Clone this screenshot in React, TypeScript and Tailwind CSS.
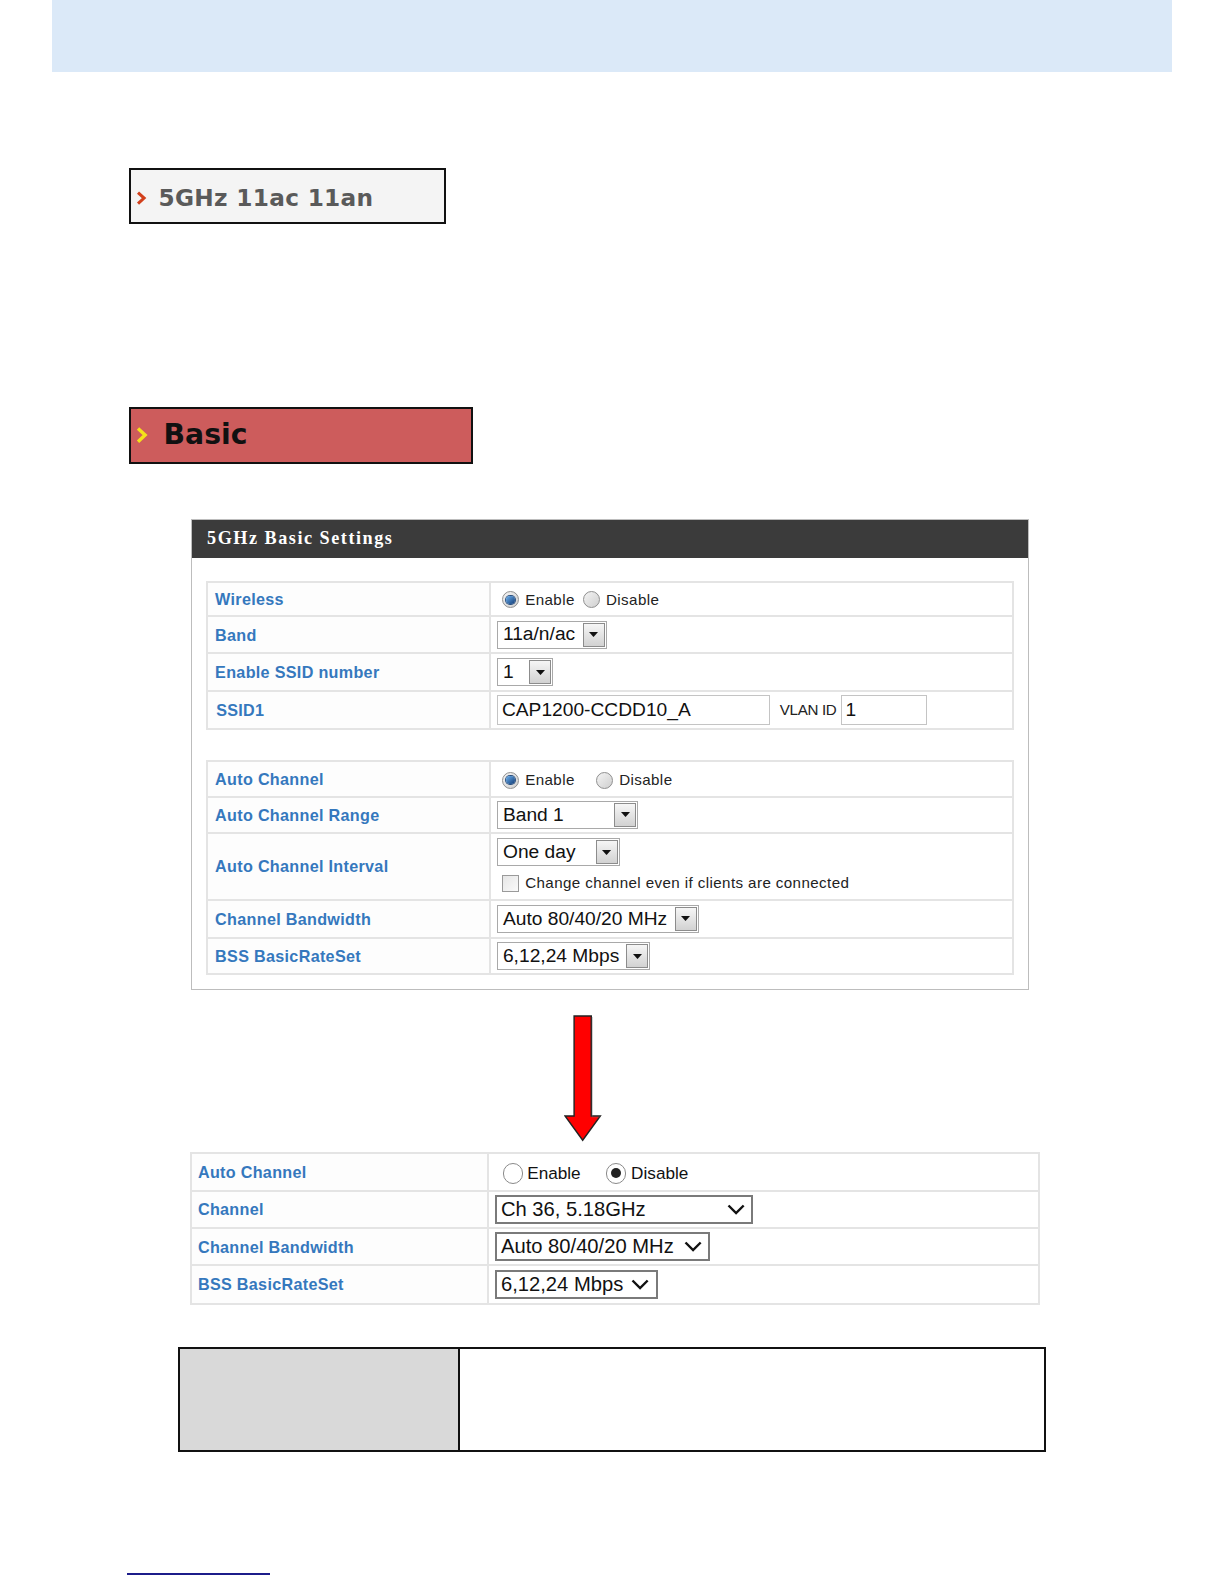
import React from "react";

const labelFont = { fontFamily: "'Liberation Sans', Arial, sans-serif" };

function OldRadio({ checked }: { checked?: boolean }) {
  return (
    <span className="inline-flex h-[17px] w-[17px] items-center justify-center rounded-full border border-[#8f8f8f] bg-gradient-to-br from-[#f4f4f4] to-[#cfcfcf]">
      {checked && (
        <span className="h-[8px] w-[8px] rounded-full bg-gradient-to-br from-[#6fb3f0] to-[#123d78] ring-1 ring-[#2a4f7f]" />
      )}
    </span>
  );
}

function NewRadio({ checked }: { checked?: boolean }) {
  return (
    <span className="inline-flex h-[20px] w-[20px] items-center justify-center rounded-full border border-[#8a8a8a] bg-white">
      {checked && <span className="h-[10px] w-[10px] rounded-full bg-[#222]" />}
    </span>
  );
}

function OldSelect({ value, width }: { value: string; width: string }) {
  return (
    <div className={`flex h-[28px] items-stretch border border-[#a9a9a9] bg-white ${width}`}>
      <span className="flex flex-1 items-center pl-[5px] text-[19px] text-[#111]" style={labelFont}>
        {value}
      </span>
      <span className="m-[1px] flex w-[22px] items-center justify-center border border-[#8c8c8c] bg-gradient-to-b from-[#f6f6f6] to-[#d2d2d2]">
        <svg width="9" height="5" viewBox="0 0 9 5">
          <path d="M0 0h9L4.5 5z" fill="#111" />
        </svg>
      </span>
    </div>
  );
}

function NewSelect({ value, width }: { value: string; width: string }) {
  return (
    <div className={`flex h-[29px] items-center justify-between border-2 border-[#7a7a7a] bg-white pl-[4px] pr-[6px] ${width}`}>
      <span className="text-[20px] text-[#111]" style={labelFont}>
        {value}
      </span>
      <svg width="18" height="11" viewBox="0 0 18 11">
        <path d="M1.5 1.5 9 9l7.5-7.5" fill="none" stroke="#111" strokeWidth="2.4" />
      </svg>
    </div>
  );
}

function Row({
  label,
  children,
  h,
  labelW = "w-[280px]",
  labelPad = "pl-[7px]",
}: {
  label: string;
  children: React.ReactNode;
  h: string;
  labelW?: string;
  labelPad?: string;
}) {
  return (
    <div className={`flex border-b-2 border-[#e4e4e4] last:border-b-0 ${h}`}>
      <div
        className={`flex shrink-0 items-center border-r-2 border-[#e4e4e4] bg-[#fdfdfd] ${labelPad} ${labelW} text-[16px] font-bold tracking-[0.3px] text-[#3578bd]`}
        style={labelFont}
      >
        {label}
      </div>
      <div className="flex flex-1 flex-col justify-center pl-[6px]">{children}</div>
    </div>
  );
}

function OptText({ children, className = "" }: { children: React.ReactNode; className?: string }) {
  return (
    <span className={`text-[15px] tracking-[0.4px] text-[#222] ${className}`} style={labelFont}>
      {children}
    </span>
  );
}

export default function App() {
  return (
    <div className="h-[1562px] w-full overflow-hidden bg-white [zoom:1.0101]" style={labelFont}>
      <div className="ml-[51px] h-[71px] w-[1109px] bg-[#dbe9f8]" />

      <div className="ml-[128px] mt-[95px] flex h-[56px] w-[314px] items-center border-2 border-[#111] bg-[#f4f4f4] pt-[5px]">
        <svg className="ml-[5px]" width="11" height="14" viewBox="0 0 11 14">
          <path d="M2 1.5 8 7l-6 5.5" fill="none" stroke="#d2401c" strokeWidth="3" />
        </svg>
        <span
          className="ml-[11px] text-[23px] font-bold tracking-[0.3px] text-[#5a5a5a]"
          style={{ fontFamily: "'DejaVu Sans', Verdana, sans-serif" }}
        >
          5GHz 11ac 11an
        </span>
      </div>

      <div className="ml-[128px] mt-[181px] flex h-[56px] w-[340px] items-center border-2 border-[#111] bg-[#cd5c5c]">
        <svg className="ml-[5px]" width="12" height="16" viewBox="0 0 12 16">
          <path d="M2 1.5 9 8l-7 6.5" fill="none" stroke="#f4e11a" strokeWidth="3.4" />
        </svg>
        <span
          className="ml-[15px] text-[28px] font-bold text-[#111]"
          style={{ fontFamily: "'DejaVu Sans', Verdana, sans-serif" }}
        >
          Basic
        </span>
      </div>

      {/* Basic settings panel */}
      <div className="ml-[189px] mt-[55px] w-[830px] border border-[#bdbdbd] pb-[13px]">
        <div className="flex h-[37px] items-center bg-[#3b3b3b] pl-[15px]">
          <span
            className="text-[18px] font-bold tracking-[1.5px] text-white"
            style={{ fontFamily: "'Liberation Serif', 'Times New Roman', serif" }}
          >
            5GHz Basic Settings
          </span>
        </div>

        <div className="mx-[14px] mt-[23px] border-2 border-[#e4e4e4]">
          <Row label="Wireless" h="h-[34px]">
            <div className="flex items-center pl-[5px] pt-[2px]">
              <OldRadio checked />
              <OptText className="ml-[6px]">Enable</OptText>
              <span className="ml-[8px]" />
              <OldRadio />
              <OptText className="ml-[6px]">Disable</OptText>
            </div>
          </Row>
          <Row label="Band" h="h-[37px]">
            <OldSelect value="11a/n/ac" width="w-[109px]" />
          </Row>
          <Row label="Enable SSID number" h="h-[37px]">
            <OldSelect value="1" width="w-[56px]" />
          </Row>
          <Row label="SSID1" h="h-[36px]" labelPad="pl-[8px]">
            <div className="flex items-center">
              <div className="flex h-[30px] w-[270px] items-center border border-[#c4c4c4] pl-[4px] text-[19px] text-[#111]">
                CAP1200-CCDD10_A
              </div>
              <span className="ml-[10px] text-[15px] tracking-[-0.3px] text-[#222]">VLAN ID</span>
              <div className="ml-[4px] flex h-[30px] w-[86px] items-center border border-[#c4c4c4] pl-[4px] text-[19px] text-[#111]">
                1
              </div>
            </div>
          </Row>
        </div>

        <div className="mx-[14px] mt-[30px] border-2 border-[#e4e4e4]">
          <Row label="Auto Channel" h="h-[35px]">
            <div className="flex items-center pl-[5px] pt-[2px]">
              <OldRadio checked />
              <OptText className="ml-[6px]">Enable</OptText>
              <span className="ml-[21px]" />
              <OldRadio />
              <OptText className="ml-[6px]">Disable</OptText>
            </div>
          </Row>
          <Row label="Auto Channel Range" h="h-[36px]">
            <OldSelect value="Band 1" width="w-[140px]" />
          </Row>
          <Row label="Auto Channel Interval" h="h-[66px]">
            <OldSelect value="One day" width="w-[122px]" />
            <div className="mt-[6px] flex items-center pl-[5px]">
              <span className="h-[17px] w-[17px] border border-[#9a9a9a] bg-gradient-to-br from-[#e6e6e6] to-[#fafafa]" />
              <OptText className="ml-[6px]">Change channel even if clients are connected</OptText>
            </div>
          </Row>
          <Row label="Channel Bandwidth" h="h-[38px]">
            <OldSelect value="Auto 80/40/20 MHz" width="w-[200px]" />
          </Row>
          <Row label="BSS BasicRateSet" h="h-[34px]">
            <OldSelect value="6,12,24 Mbps" width="w-[152px]" />
          </Row>
        </div>
      </div>

      {/* arrow */}
      <div className="ml-[558px] mt-[25px] h-[126px] w-[40px]">
        <svg width="40" height="126" viewBox="0 0 40 126">
          <path d="M10 1h17v99h9l-17.5 24L1 100h9z" fill="#ff0000" stroke="#222" strokeWidth="1.4" />
          <path d="M28 2v99h8" fill="none" stroke="#777" strokeOpacity="0.4" strokeWidth="1.2" />
        </svg>
      </div>

      {/* manual channel table */}
      <div className="ml-[188px] mt-[10px] w-[842px] border-2 border-[#e4e4e4]">
        <Row label="Auto Channel" h="h-[37px]" labelW="w-[294px]" labelPad="pl-[6px]">
          <div className="flex items-center pl-[8px] pt-[3px]">
            <NewRadio />
            <span className="ml-[4px] text-[17px] text-[#111]">Enable</span>
            <span className="ml-[25px]" />
            <NewRadio checked />
            <span className="ml-[5px] text-[17px] text-[#111]">Disable</span>
          </div>
        </Row>
        <Row label="Channel" h="h-[37px]" labelW="w-[294px]" labelPad="pl-[6px]">
          <NewSelect value="Ch 36, 5.18GHz" width="w-[256px]" />
        </Row>
        <Row label="Channel Bandwidth" h="h-[37px]" labelW="w-[294px]" labelPad="pl-[6px]">
          <NewSelect value="Auto 80/40/20 MHz" width="w-[213px]" />
        </Row>
        <Row label="BSS BasicRateSet" h="h-[36px]" labelW="w-[294px]" labelPad="pl-[6px]">
          <NewSelect value="6,12,24 Mbps" width="w-[161px]" />
        </Row>
      </div>

      {/* description table */}
      <div className="ml-[176px] mt-[42px] flex h-[104px] w-[860px] border-2 border-[#111]">
        <div className="w-[277px] border-r-2 border-[#111] bg-[#d9d9d9]" />
        <div className="flex-1 bg-white" />
      </div>

      <div className="ml-[126px] mt-[120px] h-[1.5px] w-[141px] bg-[#1c1c8a]" />
    </div>
  );
}
